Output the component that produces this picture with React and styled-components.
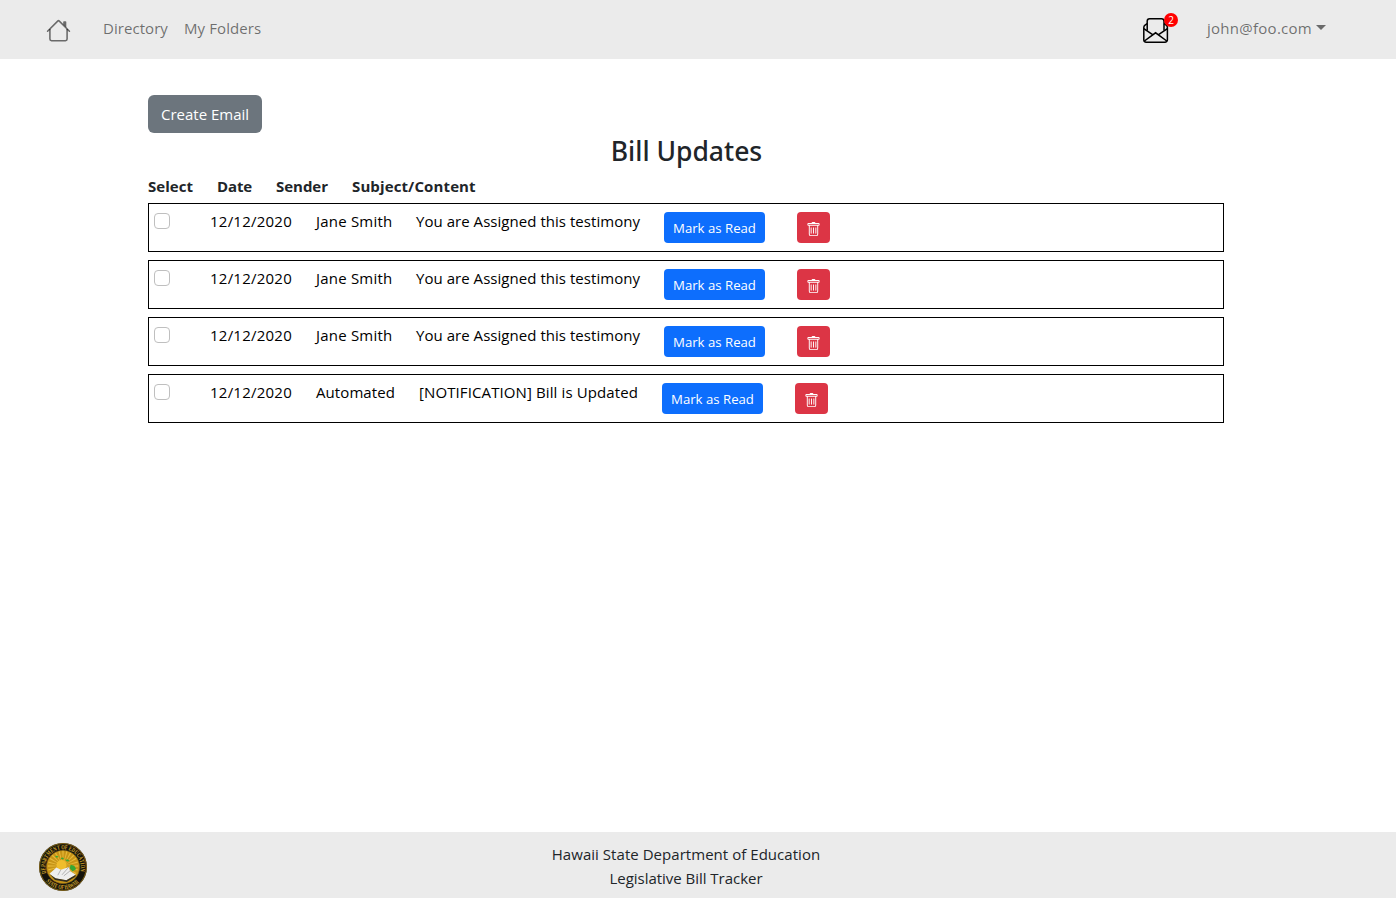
import React from "react";
import styled, { createGlobalStyle } from "styled-components";
import { BsTrash } from "react-icons/bs";

const GlobalStyle = createGlobalStyle`
  *, *::before, *::after { box-sizing: border-box; }
  body {
    margin: 0;
    background: #fff;
    color: #212529;
    font-family: "Open Sans", "Noto Sans", sans-serif;
    font-size: 15px;
    line-height: 24px;
  }
`;

const Page = styled.div`
  display: flex;
  flex-direction: column;
  min-height: 100vh;
`;

const NavBar = styled.header`
  display: flex;
  align-items: flex-start;
  height: 59px;
  padding: 16px 70px 0 46px;
  background: #ebebeb;
  color: rgba(0, 0, 0, 0.55);
`;

const HomeLink = styled.a`
  display: flex;
  margin: 2px 32px 0 0;
`;

const NavLink = styled.a`
  margin-right: 16px;
  letter-spacing: ${(p) => p.$tracking}px;
  white-space: nowrap;
`;

const Inbox = styled.a`
  position: relative;
  display: flex;
  margin: 2px 38px 0 auto;
  color: #000;
`;

const Badge = styled.span`
  position: absolute;
  top: -5px;
  left: 21px;
  width: 14px;
  height: 14px;
  border-radius: 50%;
  background: #f00;
  color: #fff;
  font-size: 10px;
  line-height: 14px;
  text-align: center;
`;

const UserMenu = styled.a`
  display: flex;
  letter-spacing: 0.268px;

  &::after {
    content: "";
    margin: 9px 0 0 4px;
    width: 0;
    height: 0;
    border: 5px solid transparent;
    border-top-color: currentColor;
    border-bottom: 0;
  }
`;

const Main = styled.main`
  flex: 1;
  width: 1076px;
  margin: 36px 0 0 148px;
`;

const Button = styled.button`
  display: block;
  height: 38px;
  padding: 0 13px;
  border: 0;
  border-radius: 6px;
  background: #6c757d;
  color: #fff;
  font: inherit;
  line-height: 38px;
  white-space: nowrap;
`;

const SmallButton = styled(Button)`
  width: ${(p) => p.$width}px;
  height: 31px;
  margin: 3px 0 0;
  padding: 1px 0 0;
  border-radius: 4px;
  background: ${(p) => p.$color};
  font-size: 13.2px;
  line-height: 30px;
  text-align: center;
`;

const IconButton = styled(SmallButton)`
  display: flex;
  align-items: flex-start;
  padding: 10px 0 0 9px;
`;

const Title = styled.h3`
  margin: 0 0 6px;
  padding: 2px 0 0 1px;
  font-family: "Noto Sans", sans-serif;
  font-size: 26.5px;
  font-weight: 500;
  line-height: 33px;
  text-align: center;
`;

const ColumnHeads = styled.div`
  display: flex;
  gap: 24px;
  margin-bottom: 5px;
  font-weight: 700;
`;

const Head = styled.span`
  width: ${(p) => p.$width}px;
  letter-spacing: ${(p) => p.$tracking}px;
  white-space: nowrap;
`;

const MessageList = styled.div`
  display: grid;
  gap: 8px;
`;

const Message = styled.article`
  display: flex;
  align-items: flex-start;
  gap: 24px;
  height: 49px;
  padding: 5px;
  border: 1px solid #000;
  color: #000;
`;

const Checkbox = styled.input`
  appearance: none;
  width: 16px;
  height: 16px;
  margin: 4px 16px 0 0;
  border: 1px solid #bfbfbf;
  border-radius: 4px;
  background: #fff;
`;

const Cell = styled.span`
  width: ${(p) => p.$width}px;
  letter-spacing: ${(p) => p.$tracking}px;
  white-space: nowrap;
`;

const Actions = styled.div`
  display: flex;
  gap: 32px;
`;

const Footer = styled.footer`
  display: grid;
  grid-template-columns: 148px 1076px;
  height: 66px;
  background: #ebebeb;
`;

const SealFrame = styled.div`
  padding: 10px 0 0 38px;
`;

const Credits = styled.div`
  padding-top: 10px;
  text-align: center;
`;

const CreditLine = styled.div`
  letter-spacing: ${(p) => p.$tracking}px;
`;

const HouseIcon = () => (
  <svg width="25" height="25" viewBox="0 0 16 16" fill="currentColor">
    <path fillRule="evenodd" d="M2 13.5V7h1v6.5a.5.5 0 0 0 .5.5h9a.5.5 0 0 0 .5-.5V7h1v6.5a1.5 1.5 0 0 1-1.5 1.5h-9A1.5 1.5 0 0 1 2 13.5zm11-11V6l-2-2V2.5a.5.5 0 0 1 .5-.5h1a.5.5 0 0 1 .5.5z" />
    <path fillRule="evenodd" d="M7.293 1.5a1 1 0 0 1 1.414 0l6.647 6.646a.5.5 0 0 1-.708.708L8 2.207 1.354 8.854a.5.5 0 1 1-.708-.708L7.293 1.5z" />
  </svg>
);

const OpenEnvelopeIcon = () => (
  <svg width="26" height="25" viewBox="0 0 26 25" fill="none" stroke="currentColor" strokeWidth="1.5">
    <path d="M4.2 12.6V3.2A2.4 2.4 0 0 1 6.6.8h12a2.4 2.4 0 0 1 2.4 2.4v9.4" />
    <path d="M4.2 5.7L2 7.2Q.8 8 .8 9.6v12.2A2.4 2.4 0 0 0 3.2 24.2H22a2.4 2.4 0 0 0 2.4-2.4V9.6q0-1.6-1.2-2.4L21 5.7" />
    <path d="M.8 10.6l8.8 6.1M24.4 10.6L15.6 16.7M1.4 23l11.2-8.2L23.8 23" />
  </svg>
);

const RAYS = Array.from({ length: 24 }, (_, i) => i * 15);

const Seal = () => (
  <svg width="50" height="50" viewBox="0 0 50 50">
    <defs>
      <path id="seal-top" d="M8.27 31.09A17.8 17.8 0 1 1 41.73 31.09" />
      <path id="seal-bottom" d="M8 39.27A22.2 22.2 0 0 0 42 39.27" />
    </defs>
    <circle cx="25" cy="25" r="24" fill="#15130b" />
    <circle cx="25" cy="25" r="23.4" fill="none" stroke="#a07818" strokeWidth=".8" />
    <circle cx="25" cy="25" r="16.6" fill="#c79416" stroke="#8a6a1c" strokeWidth=".6" />
    {RAYS.map((a) => (
      <path key={a} d="M25 24L24.3 8.8h1.4z" fill="#e6b93a" transform={`rotate(${a} 25 24)`} />
    ))}
    <circle cx="23.5" cy="23" r="5" fill="#f0bd2c" />
    <path d="M17 14.6l2-.9 1.4 1-1.5 1zM22.6 16l2.4-.4 1 1.3-2 .5zM27 17.8l3-.3 1.6 1.6-2.4.5zM32.6 22.8l3.6 1 2 3.2-3.6 2.4-2.8-3.2z" fill="#36a832" />
    <path d="M11.6 31.8l6.8-6.4 4.4 2.4 8.2-2.9 1 4 5.8 3.8-9.4 5.6-11-1.8z" fill="#eee" />
    <path d="M22.8 27.8l-3 5.4M31 24.9l-7 7.9M32 28.9l-6.2 5" fill="none" stroke="#999" strokeWidth=".7" />
    <path d="M11.6 32.2l6 4.1 10.8 1.9 9.4-5.5-.4 2-8.6 5.2-11.8-1.9z" fill="#332e22" />
    <text fill="#d2a52c" fontFamily="Liberation Serif, serif" fontSize="6.4" fontWeight="700" textLength="66" lengthAdjust="spacingAndGlyphs">
      <textPath href="#seal-top">DEPARTMENT OF EDUCATION</textPath>
    </text>
    <text fill="#d2a52c" fontFamily="Liberation Serif, serif" fontSize="6.4" fontWeight="700" textLength="37" lengthAdjust="spacingAndGlyphs">
      <textPath href="#seal-bottom">STATE OF HAWAII</textPath>
    </text>
  </svg>
);

const HEADS = [
  { text: "Select", width: 45, tracking: 0.035 },
  { text: "Date", width: 35, tracking: -0.134 },
  { text: "Sender", width: 52, tracking: -0.025 },
  { text: "Subject/Content", width: 124, tracking: 0.12 },
];

const DATE = { text: "12/12/2020", width: 82, tracking: 0.239 };
const JANE = { text: "Jane Smith", width: 76, tracking: 0.2 };
const ASSIGNED = { text: "You are Assigned this testimony", width: 224, tracking: 0.04 };

const MESSAGES = [
  [DATE, JANE, ASSIGNED],
  [DATE, JANE, ASSIGNED],
  [DATE, JANE, ASSIGNED],
  [
    DATE,
    { text: "Automated", width: 79, tracking: 0.086 },
    { text: "[NOTIFICATION] Bill is Updated", width: 219, tracking: 0.108 },
  ],
];

export default function App() {
  return (
    <Page>
      <GlobalStyle />
      <NavBar>
        <HomeLink><HouseIcon /></HomeLink>
        <NavLink $tracking={0.05}>Directory</NavLink>
        <NavLink $tracking={0.117}>My Folders</NavLink>
        <Inbox>
          <OpenEnvelopeIcon />
          <Badge>2</Badge>
        </Inbox>
        <UserMenu>john@foo.com</UserMenu>
      </NavBar>
      <Main>
        <Button>Create Email</Button>
        <Title>Bill Updates</Title>
        <ColumnHeads>
          {HEADS.map((h) => (
            <Head key={h.text} $width={h.width} $tracking={h.tracking}>{h.text}</Head>
          ))}
        </ColumnHeads>
        <MessageList>
          {MESSAGES.map((cells, i) => (
            <Message key={i}>
              <Checkbox type="checkbox" />
              {cells.map((c) => (
                <Cell key={c.text} $width={c.width} $tracking={c.tracking}>{c.text}</Cell>
              ))}
              <Actions>
                <SmallButton $width={101} $color="#0d6efd">Mark as Read</SmallButton>
                <IconButton $width={33} $color="#dc3545"><BsTrash size={15} /></IconButton>
              </Actions>
            </Message>
          ))}
        </MessageList>
      </Main>
      <Footer>
        <SealFrame><Seal /></SealFrame>
        <Credits>
          <CreditLine $tracking={0.042}>Hawaii State Department of Education</CreditLine>
          <CreditLine $tracking={-0.029}>Legislative Bill Tracker</CreditLine>
        </Credits>
      </Footer>
    </Page>
  );
}
